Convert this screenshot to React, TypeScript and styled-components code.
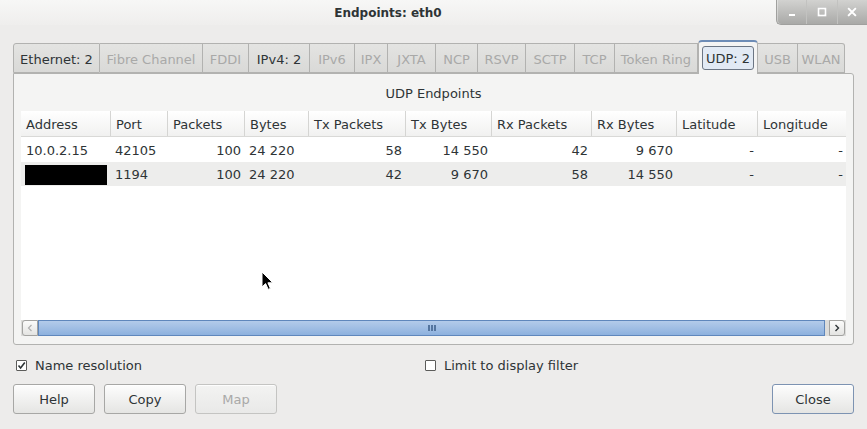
import styled, { createGlobalStyle } from "styled-components";

const GlobalStyle = createGlobalStyle`
  html, body {
    margin: 0;
    padding: 0;
  }
  body {
    background: #edeceb;
    font-family: "DejaVu Sans", "Liberation Sans", sans-serif;
    color: #2e3436;
  }
`;

const tabs = [
  { label: "Ethernet: 2", width: 87, enabled: true },
  { label: "Fibre Channel", width: 103 },
  { label: "FDDI", width: 46 },
  { label: "IPv4: 2", width: 61, enabled: true },
  { label: "IPv6", width: 45 },
  { label: "IPX", width: 33 },
  { label: "JXTA", width: 48 },
  { label: "NCP", width: 42 },
  { label: "RSVP", width: 48 },
  { label: "SCTP", width: 49 },
  { label: "TCP", width: 40 },
  { label: "Token Ring", width: 83 },
  { label: "UDP: 2", width: 60, enabled: true, active: true },
  { label: "USB", width: 40 },
  { label: "WLAN", width: 47 },
];

type Align = "left" | "right";

const columns: { name: string; align: Align }[] = [
  { name: "Address", align: "left" },
  { name: "Port", align: "left" },
  { name: "Packets", align: "right" },
  { name: "Bytes", align: "left" },
  { name: "Tx Packets", align: "right" },
  { name: "Tx Bytes", align: "right" },
  { name: "Rx Packets", align: "right" },
  { name: "Rx Bytes", align: "right" },
  { name: "Latitude", align: "right" },
  { name: "Longitude", align: "right" },
];

const rows = [
  ["10.0.2.15", "42105", "100", "24 220", "58", "14 550", "42", "9 670", "-", "-"],
  [null, "1194", "100", "24 220", "42", "9 670", "58", "14 550", "-", "-"],
];

function App() {
  return (
    <Window>
      <GlobalStyle />
      <TitleBar>
        <Title>Endpoints: eth0</Title>
        <WindowControls>
          <ControlButton>
            <svg width="10" height="10" viewBox="0 0 10 10">
              <rect x="2" y="7" width="6" height="2" fill="#fff" />
            </svg>
          </ControlButton>
          <ControlButton>
            <svg width="10" height="10" viewBox="0 0 10 10">
              <rect x="1.5" y="1.5" width="7" height="7" fill="none" stroke="#fff" strokeWidth="2" />
            </svg>
          </ControlButton>
          <ControlButton>
            <svg width="10" height="10" viewBox="0 0 10 10">
              <path d="M1 1 L9 9 M9 1 L1 9" stroke="#fff" strokeWidth="2.2" />
            </svg>
          </ControlButton>
        </WindowControls>
      </TitleBar>

      <Body>
        <TabStrip>
          {tabs.map((t) => (
            <Tab key={t.label} $width={t.width} $active={!!t.active} $enabled={!!t.enabled}>
              {t.active ? <TabFocus>{t.label}</TabFocus> : t.label}
            </Tab>
          ))}
        </TabStrip>

        <Panel>
          <PanelCaption>UDP Endpoints</PanelCaption>
          <TableView>
            <Grid>
              {columns.map((c, i) => (
                <HeaderCell key={c.name} $first={i === 0}>
                  {c.name}
                </HeaderCell>
              ))}
              {rows.map((r, ri) =>
                r.map((v, ci) => (
                  <Cell key={`${ri}-${ci}`} $align={columns[ci].align} $alt={ri % 2 === 1}>
                    {v === null ? <Redacted /> : v}
                  </Cell>
                ))
              )}
            </Grid>
            <Filler />
            <Scrollbar>
              <ScrollButton $side="left">
                <svg width="6" height="8" viewBox="0 0 6 8">
                  <path d="M4.5 1 L1.5 4 L4.5 7" fill="none" stroke="#b0b0b0" strokeWidth="1.2" />
                </svg>
              </ScrollButton>
              <Thumb>
                <Grip />
              </Thumb>
              <ScrollButton $side="right">
                <svg width="6" height="8" viewBox="0 0 6 8">
                  <path d="M1.5 1 L4.5 4 L1.5 7" fill="none" stroke="#2e3436" strokeWidth="1.4" />
                </svg>
              </ScrollButton>
            </Scrollbar>
          </TableView>
        </Panel>

        <OptionsRow>
          <CheckLabel>
            <CheckBox>
              <svg width="9" height="9" viewBox="0 0 9 9">
                <path d="M1.5 4.5 L3.6 7 L7.8 1.5" fill="none" stroke="#2e3436" strokeWidth="1.6" />
              </svg>
            </CheckBox>
            Name resolution
          </CheckLabel>
          <CheckLabel>
            <CheckBox />
            Limit to display filter
          </CheckLabel>
        </OptionsRow>

        <ButtonRow>
          <Button>Help</Button>
          <Button>Copy</Button>
          <Button disabled>Map</Button>
          <Spacer />
          <Button $default>Close</Button>
        </ButtonRow>
      </Body>

      <Cursor width="13" height="20" viewBox="0 0 13 20">
        <path d="M1 1 L1 16 L4.6 12.6 L7.2 18.4 L9.4 17.4 L6.9 11.8 L11.8 11.8 Z" fill="#000" stroke="#fff" strokeWidth="1" />
      </Cursor>
    </Window>
  );
}

export default App;

const Window = styled.div`
  position: relative;
  width: 867px;
  height: 429px;
  overflow: hidden;
  background: #edeceb;
  display: flex;
  flex-direction: column;
  font-size: 13px;
`;

const TitleBar = styled.div`
  height: 25px;
  display: flex;
  align-items: stretch;
  background: linear-gradient(#f7f7f6, #efeeed);
`;

const Title = styled.div`
  flex: 1;
  display: flex;
  align-items: center;
  justify-content: center;
  font-weight: bold;
  font-size: 12px;
  color: #2e3436;
  padding-top: 1px;
`;

const WindowControls = styled.div`
  width: 90px;
  display: flex;
  background: linear-gradient(#d2d2d0, #a9a9a7);
  border-left: 1px solid #a0a09e;
  border-bottom: 1px solid #a0a09e;
  border-bottom-left-radius: 5px;
  box-shadow: inset 1px 0 rgba(255, 255, 255, 0.35);
`;

const ControlButton = styled.div`
  flex: 1;
  display: flex;
  align-items: center;
  justify-content: center;
  & + & {
    border-left: 1px solid #c2c2c0;
  }
  svg {
    filter: drop-shadow(0 0 0.5px rgba(0, 0, 0, 0.3));
  }
`;

const Body = styled.div`
  flex: 1;
  display: flex;
  flex-direction: column;
  padding: 15px 13px 0;
`;

const TabStrip = styled.div`
  height: 34px;
  display: flex;
  align-items: flex-end;
  position: relative;
  z-index: 1;
  margin-bottom: -1px;
`;

const Tab = styled.div<{ $width: number; $active: boolean; $enabled: boolean }>`
  width: ${(p) => p.$width}px;
  height: ${(p) => (p.$active ? 34 : 30)}px;
  box-sizing: border-box;
  display: flex;
  align-items: center;
  justify-content: center;
  padding-top: ${(p) => (p.$active ? 0 : 2)}px;
  margin-bottom: ${(p) => (p.$active ? 0 : 1)}px;
  border: 1px solid #b2b2b0;
  border-left: ${(p) => (p.$active ? "1px solid #b2b2b0" : "none")};
  border-bottom: ${(p) => (p.$active ? "none" : "1px solid #b2b2b0")};
  border-top-color: ${(p) => (p.$active ? "#6d8cb6" : "#b2b2b0")};
  border-top-width: ${(p) => (p.$active ? 2 : 1)}px;
  border-radius: ${(p) => (p.$active ? "4px 4px 0 0" : "0")};
  background: ${(p) => (p.$active ? "#f4f4f3" : "linear-gradient(#e4e4e2, #d9d9d7)")};
  color: ${(p) => (p.$enabled ? "#2e3436" : "#a9a9a8")};
  white-space: nowrap;
  &:first-child {
    border-left: 1px solid #b2b2b0;
    border-top-left-radius: 3px;
  }
  &:last-child {
    border-top-right-radius: 3px;
  }
`;

const TabFocus = styled.span`
  display: flex;
  align-items: center;
  height: 24px;
  padding: 1px 3px 0;
  box-sizing: border-box;
  border: 1px solid #6c7684;
  border-radius: 3px;
  background: #e2eaf4;
`;

const Panel = styled.div`
  height: 272px;
  box-sizing: border-box;
  display: flex;
  flex-direction: column;
  border: 1px solid #b2b2b0;
  border-radius: 0 3px 3px 3px;
  background: #f4f4f3;
  padding: 0 7px 8px;
`;

const PanelCaption = styled.div`
  height: 37px;
  display: flex;
  align-items: center;
  justify-content: center;
  padding-top: 2px;
  box-sizing: border-box;
`;

const TableView = styled.div`
  flex: 1;
  display: flex;
  flex-direction: column;
  overflow: hidden;
  background: #fff;
`;

const Grid = styled.div`
  display: grid;
  grid-template-columns: 89px 57px 77px 64px 97px 86px 100px 85px 81px 89px;
  grid-template-rows: 26px 25px 24px;
  width: 825px;
`;

const HeaderCell = styled.div<{ $first: boolean }>`
  display: flex;
  align-items: center;
  padding-left: ${(p) => (p.$first ? 5 : 6)}px;
  padding-top: 1px;
  background: linear-gradient(#ffffff, #f1f1f0);
  border-bottom: 1px solid #d9d9d7;
  box-shadow: ${(p) => (p.$first ? "none" : "inset 1px 0 #d5d5d3")};
  white-space: nowrap;
`;

const Cell = styled.div<{ $align: Align; $alt: boolean }>`
  display: flex;
  align-items: center;
  justify-content: ${(p) => (p.$align === "right" ? "flex-end" : "flex-start")};
  padding: 1px ${(p) => (p.$align === "right" ? 3 : 0)}px 0 ${(p) => (p.$align === "left" ? 5 : 0)}px;
  background: ${(p) => (p.$alt ? "#ededec" : "#fff")};
  white-space: nowrap;
`;

const Redacted = styled.div`
  width: 82px;
  height: 20px;
  background: #000;
  margin-left: -1px;
`;

const Filler = styled.div`
  flex: 1;
  background: #fff;
`;

const Scrollbar = styled.div`
  height: 16px;
  display: flex;
  align-items: stretch;
  background: #dcdcda;
  padding: 0 1px;
`;

const ScrollButton = styled.div<{ $side: "left" | "right" }>`
  width: 14px;
  display: flex;
  align-items: center;
  justify-content: center;
  background: linear-gradient(#fbfbfa, #e4e4e2);
  border: 1px solid #a3a3a1;
  border-radius: ${(p) => (p.$side === "left" ? "3px 0 0 3px" : "0 3px 3px 0")};
  margin-left: ${(p) => (p.$side === "right" ? 4 : 0)}px;
`;

const Thumb = styled.div`
  flex: 1;
  display: flex;
  align-items: center;
  justify-content: center;
  background: linear-gradient(#b3cbea, #8db1de);
  border: 1px solid #5f87bc;
`;

const Grip = styled.div`
  width: 8px;
  height: 6px;
  border-left: 2px solid #54759f;
  border-right: 2px solid #54759f;
  box-sizing: border-box;
  position: relative;
  &::after {
    content: "";
    position: absolute;
    left: 1px;
    top: 0;
    width: 2px;
    height: 6px;
    background: #54759f;
  }
`;

const OptionsRow = styled.div`
  display: grid;
  grid-template-columns: 409px 1fr;
  height: 20px;
  margin-top: 10px;
  padding-left: 3px;
`;

const CheckLabel = styled.label`
  display: flex;
  align-items: center;
  gap: 8px;
  white-space: nowrap;
`;

const CheckBox = styled.span`
  width: 11px;
  height: 11px;
  box-sizing: border-box;
  border: 1px solid #5c5c5a;
  border-radius: 1px;
  background: #fff;
  display: flex;
  align-items: center;
  justify-content: center;
`;

const ButtonRow = styled.div`
  display: flex;
  gap: 9px;
  margin-top: 9px;
`;

const Spacer = styled.div`
  flex: 1;
`;

const Button = styled.button<{ $default?: boolean }>`
  width: 82px;
  height: 30px;
  font-family: inherit;
  font-size: 13px;
  color: #2e3436;
  border: 1px solid ${(p) => (p.$default ? "#7d93b2" : "#a7a7a5")};
  border-radius: 3px;
  background: linear-gradient(#fdfdfd, #e5e5e3);
  box-shadow: inset 0 1px rgba(255, 255, 255, 0.8);
  padding: 0;
  &:disabled {
    color: #a9a9a8;
    border-color: #c4c4c2;
    background: linear-gradient(#f3f3f2, #e9e9e8);
  }
`;

const Cursor = styled.svg`
  position: absolute;
  left: 261px;
  top: 271px;
  pointer-events: none;
`;
